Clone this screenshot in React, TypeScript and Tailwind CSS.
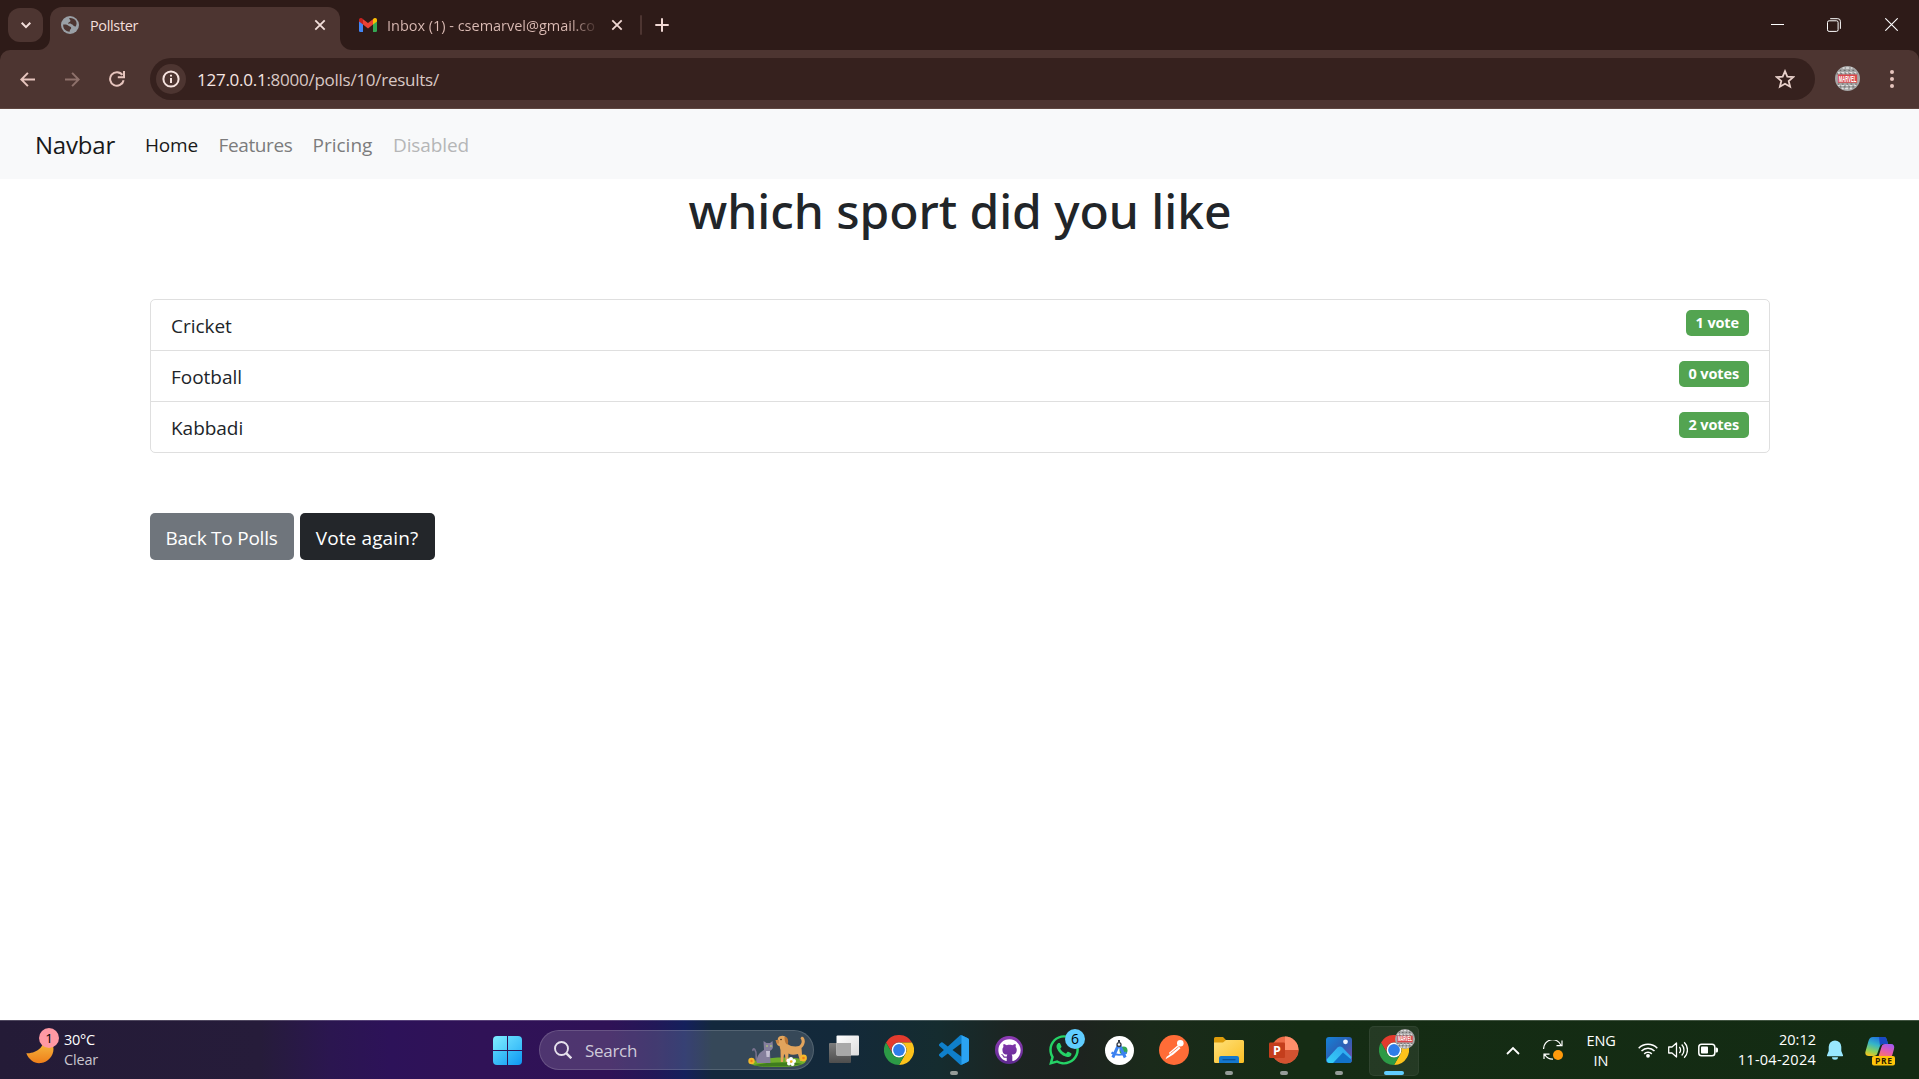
import React from "react";
import { FaGithub, FaWhatsapp } from "react-icons/fa";

function ChromeLogo({ className = "" }: { className?: string }) {
  return (
    <svg viewBox="0 0 30 30" className={className}>
      <path d="M2 7.5A15 15 0 0 1 28 7.5H15A7.5 7.5 0 0 0 8.5 18.75Z" fill="#e33b2e" />
      <path d="M28 7.5A15 15 0 0 1 15 30L21.5 18.75A7.5 7.5 0 0 0 15 7.5Z" fill="#fcc21b" />
      <path d="M15 30A15 15 0 0 1 2 7.5L8.5 18.75A7.5 7.5 0 0 0 21.5 18.75Z" fill="#2c9a46" />
      <circle cx="15" cy="15" r="7.4" fill="#fff" />
      <circle cx="15" cy="15" r="5.9" fill="#2f7de9" />
    </svg>
  );
}

function Marvel({ className = "" }: { className?: string }) {
  return (
    <svg viewBox="0 0 26 26" className={`shrink-0 overflow-visible ${className}`}>
      <circle cx="13" cy="13" r="13" fill="#a6a6a6" />
      <g stroke="#e0e0e0" strokeWidth="1.6" strokeDasharray="2 1.5 3 2">
        <path d="M8 2H18M3 7H23M3 20H23M7 23.5H19" />
      </g>
      <g stroke="#6d6d6d" strokeWidth="1.3" strokeDasharray="1.5 2.5 2 3">
        <path d="M5 4.5H21M1.5 8.200H24M3 18.800H23.500M5 21.800H21" />
      </g>
      <rect x="3" y="8.800" width="20" height="8.600" fill="#d9474c" />
      <text x="13" y="16.200" fontSize="8.500" fontWeight="700" fontFamily="Liberation Sans" fill="#fff" textAnchor="middle" textLength="18" lengthAdjust="spacingAndGlyphs">MARVEL</text>
    </svg>
  );
}

function Cross({ className = "" }: { className?: string }) {
  return (
    <svg viewBox="0 0 12 12" className={`h-3 w-3 shrink-0 ${className}`} stroke="currentColor" strokeWidth="1.8">
      <path d="M1.3 1.3 10.7 10.7M10.7 1.3 1.3 10.7" />
    </svg>
  );
}

function TabStrip() {
  return (
    <div className="flex h-[50px] bg-[#2e1b18] text-[14.5px] leading-5">
      <div className="z-10 ml-2 mt-2 flex h-[34px] w-[35px] items-center justify-center rounded-[12px] bg-[#4d3531] text-[#f3dfdb]">
        <svg viewBox="0 0 12 12" className="h-3 w-3" fill="none" stroke="currentColor" strokeWidth="2">
          <path d="M1.7 3.8 6 8.1 10.3 3.8" />
        </svg>
      </div>
      <div className="relative ml-[7px] mt-[7px] flex h-[43px] w-[290px] rounded-t-[12px] bg-[#4d3531] text-[#f3dfdb]">
        <span className="absolute -left-3 bottom-0 h-3 w-3 bg-[#4d3531]">
          <span className="block h-3 w-3 rounded-br-[12px] bg-[#2e1b18]" />
        </span>
        <span className="absolute -right-3 bottom-0 h-3 w-3 bg-[#4d3531]">
          <span className="block h-3 w-3 rounded-bl-[12px] bg-[#2e1b18]" />
        </span>
        <div className="flex h-9 w-full items-center pl-[11px] pr-[14px]">
          <svg viewBox="0 0 18 18" className="h-[18px] w-[18px]">
            <circle cx="9" cy="9" r="9" fill="#9aa0a6" />
            <path d="M2.2 8.5C4 8.6 6 8.3 7.5 9.8 8.6 11 10.2 10.3 10.2 12 10.2 13 8.8 13.2 8.6 15.8 4.5 15.5 1.8 12.3 2.2 8.5ZM8.3 2.1C8 3.8 9.6 3.6 9.4 5 9.2 6.2 7.3 5.8 7.3 7.4 7.4 8.4 9.6 7.6 11 8.3 12.6 9.2 12.3 10.5 14.8 10.6 17.4 5.6 13.4 1.5 8.3 2.1Z" fill="#4d3531" />
          </svg>
          <span className="ml-[11px] pt-0.5 tracking-[-0.36px]">Pollster</span>
          <Cross className="ml-auto" />
        </div>
      </div>
      <div className="mt-[7px] flex h-9 items-center text-[#dcbcb5]">
        <svg viewBox="0 0 18 14" className="ml-[19px] h-[14px] w-[18px]">
          <path d="M0 2V12.7A1.3 1.3 0 0 0 1.3 14H4V5.8Z" fill="#4285f4" />
          <path d="M18 2V12.7A1.3 1.3 0 0 1 16.7 14H14V5.8Z" fill="#34a853" />
          <path d="M14 1.2V6.6L18 3.6V2C18 .1 15.9-.6 14.6.5Z" fill="#fbbc04" />
          <path d="M4 6.6V1.2L9 5 14 1.2V6.6L9 10.4Z" fill="#ea4335" />
          <path d="M0 2V3.6L4 6.6V1.2L3.4.5C2.1-.6 0 .1 0 2Z" fill="#c5221f" />
        </svg>
        <span className="ml-[10px] w-[208px] bg-linear-to-r from-[#dcbcb5] from-88% to-[#4a3430] bg-clip-text pt-0.5 whitespace-nowrap text-transparent tracking-[-0.02px]">
          Inbox (1) - csemarvel@gmail.co
        </span>
        <Cross className="ml-[16px] text-[#f0d8d3]" />
        <span className="ml-[17px] h-5 w-[2px] rounded bg-[#4d3531]" />
        <svg viewBox="0 0 14 14" className="ml-[13px] h-[14px] w-[14px]" stroke="#f0d8d3" strokeWidth="2">
          <path d="M7 .3V13.7M.3 7H13.7" />
        </svg>
      </div>
      <div className="ml-auto flex h-[49px] items-center pr-[21px] text-white">
        <span className="h-px w-[13px] bg-white" />
        <svg viewBox="0 0 14 14" className="ml-[43px] h-[14px] w-[14px]" fill="none" stroke="currentColor">
          <rect x=".5" y="2.8" width="10.6" height="10.6" rx="1.6" />
          <path d="M3.2 .7H10.8A2.6 2.6 0 0 1 13.4 3.3V10.8" />
        </svg>
        <svg viewBox="0 0 13 13" className="ml-[44px] h-[13px] w-[13px]" stroke="currentColor" strokeWidth="1.1">
          <path d="M.3 .3 12.7 12.7M12.7 .3 .3 12.7" />
        </svg>
      </div>
    </div>
  );
}

function Toolbar() {
  return (
    <div className="bg-[#2e1b18]">
      <div className="flex h-[59px] items-center rounded-t-[10px] border-b border-[#5e4640] bg-[#4d3531] pl-5 pr-[25px] text-[#e6c4bd]">
        <svg viewBox="0 0 15 15" className="h-[15px] w-[15px]" fill="none" stroke="currentColor" strokeWidth="2">
          <path d="M15 7.5H1.6M7.9 .9 1.3 7.5 7.9 14.1" />
        </svg>
        <svg viewBox="0 0 15 15" className="ml-[30px] h-[15px] w-[15px]" fill="none" stroke="#8e716b" strokeWidth="2">
          <path d="M0 7.5H13.4M7.1 .9 13.7 7.5 7.1 14.1" />
        </svg>
        <svg viewBox="0 0 16 16" className="ml-[29px] h-4 w-4" fill="none" stroke="currentColor" strokeWidth="2">
          <path d="M14.6 9.2A6.8 6.8 0 1 1 13.4 3.9" />
          <path d="M15 0V6.2H8.8" />
        </svg>
        <div className="ml-[25px] flex h-[42px] flex-1 items-center rounded-full bg-[#36211e] pl-[6px] pr-5">
          <span className="flex h-[30px] w-[30px] items-center justify-center rounded-full bg-[#4d3531]">
            <svg viewBox="0 0 18 18" className="h-[18px] w-[18px]" fill="none" stroke="#f6e3df" strokeWidth="2">
              <circle cx="9" cy="9" r="7.6" />
              <path d="M9 8V13M9 4.8V6.6" />
            </svg>
          </span>
          <span className="ml-[11px] whitespace-nowrap pt-0.5 text-[17px] leading-5 tracking-[-0.26px] text-[#d9c8c4]">
            <span className="text-[#f6e6e2]">127.0.0.1</span>:8000/polls/10/results/
          </span>
          <svg viewBox="0 0 20 20" className="ml-auto h-5 w-5" fill="none" stroke="#e8d0ca" strokeWidth="1.8">
            <path d="M10 2.2 12.3 7.6 18.2 8.1 13.7 12 15.1 17.7 10 14.7 4.9 17.7 6.3 12 1.8 8.1 7.7 7.6Z" />
          </svg>
        </div>
        <Marvel className="-mt-px ml-[20px] h-[25px] w-[25px]" />
        <div className="ml-[30px] flex w-1 flex-col gap-[3px]">
          <span className="h-1 w-1 rounded-full bg-current" />
          <span className="h-1 w-1 rounded-full bg-current" />
          <span className="h-1 w-1 rounded-full bg-current" />
        </div>
      </div>
    </div>
  );
}

const CHOICES = [
  { name: "Cricket", votes: "1 vote" },
  { name: "Football", votes: "0 votes" },
  { name: "Kabbadi", votes: "2 votes" },
];

function Page() {
  return (
    <main className="flex-1 bg-white text-[19px] text-[#212529]">
      <nav className="flex h-[70px] items-center bg-[#f8f9fa] pl-[35px] pt-0.5">
        <span className="w-[110px] text-[24px] tracking-[-0.2px] text-[#191919]">Navbar</span>
        <span className="w-[73.500px] tracking-[-0.17px] text-[#191919]">Home</span>
        <span className="w-[94px] tracking-[-0.37px] text-[#7c7c7d]">Features</span>
        <span className="w-[80.500px] text-[#7c7c7d]">Pricing</span>
        <span className="tracking-[-0.11px] text-[#b5b6b7]">Disabled</span>
      </nav>
      <div className="mx-auto w-[1620px]">
        <h1 className="pt-0.5 pl-px text-center font-['Noto_Sans'] text-[48px] leading-[60px] font-medium tracking-[-0.05px]">
          which sport did you like
        </h1>
        <ul className="mt-[58px] divide-y divide-[#dfdfdf] rounded-[5px] border border-[#dfdfdf]">
          {CHOICES.map((c) => (
            <li key={c.name} className="box-content flex h-[50px] items-start justify-between pl-[20.500px] pr-[20px]">
              <span className="pt-px leading-[51px] tracking-[-0.03px]">{c.name}</span>
              <span className="mt-[10px] h-[26px] rounded-[5px] bg-[#53a451] px-[9.5px] text-[14.5px] leading-[25px] font-bold tracking-[-0.12px] text-white">
                {c.votes}
              </span>
            </li>
          ))}
        </ul>
        <div className="mt-[60px] flex gap-[6px] text-white">
          <span className="h-[47px] w-[144px] rounded-[5px] bg-[#6f757c] pt-[2px] text-center leading-[47px] tracking-[-0.24px]">
            Back To Polls
          </span>
          <span className="h-[47px] w-[135px] rounded-[5px] bg-[#23262a] pt-[2px] text-center leading-[47px] tracking-[0.12px]">
            Vote again?
          </span>
        </div>
      </div>
    </main>
  );
}

function Pets() {
  return (
    <svg viewBox="0 0 60 32" className="h-8 w-[60px]">
      <path d="M2 28C8 22 50 20 58 26 56 31 45 32 28 32 14 32 4 31 2 28Z" fill="#6fae2c" />
      <path d="M6 30C20 27 44 27 54 29 46 32 14 32.500 6 30Z" fill="#3f7d1e" />
      <path d="M10 27C6 24 10 19 7 15 6 13 4.500 14 5 16" fill="none" stroke="#77718d" strokeWidth="1.600" />
      <path d="M9 28C8 21 12 17 16 15L15.500 6 18.500 8H22L24.500 6 25 12C25 14 23 15 22 16L22.500 28Z" fill="#857f9c" />
      <path d="M18 16H22L21.500 22H18.500Z" fill="#c5c0d4" />
      <circle cx="19" cy="11" r=".8" fill="#bfe36a" />
      <circle cx="23" cy="11" r=".8" fill="#bfe36a" />
      <path d="M30 3C32-.5 38 0 39 4L39.500 9C42 11.500 48 12 51 11 54.500 9 54 5 52.500 3.500 53.500 0 57 2 56.800 7 56.300 10 55 12 53.500 13L54.500 26H52L50 19C46 20 43 20 40.500 18.500L40 27H37.800L37 19.500H36L35 27H32.800L32.500 15 31.500 11C29 11 28 8 29.500 6Z" fill="#e2a45c" />
      <path d="M36.500 2C40 1 41 7 39.500 9.500 37.500 9 36.500 6 36.500 2Z" fill="#b87333" />
      <path d="M27.500 5H31V8.500H28.500Z" fill="#c98543" />
      <circle cx="33" cy="4.500" r=".8" fill="#3a2415" />
      <g fill="#fff"><circle cx="43" cy="24" r="2" /><circle cx="46" cy="26" r="2" /><circle cx="44.500" cy="29" r="2" /><circle cx="41" cy="28.500" r="2" /><circle cx="40.500" cy="25.500" r="2" /></g>
      <circle cx="43.200" cy="26.500" r="1.300" fill="#f4b51c" />
      <circle cx="3.500" cy="26" r="3.200" fill="#f5b92a" />
      <circle cx="3.500" cy="26" r="1.200" fill="#f07e1a" />
      <circle cx="55.500" cy="23" r="3.400" fill="#f5b92a" />
      <circle cx="55.500" cy="23" r="1.300" fill="#f07e1a" />
    </svg>
  );
}

function TaskIcon({ children, dot = false }: { children: React.ReactNode; dot?: boolean }) {
  return (
    <div className="relative flex h-[59px] w-[55px] items-center justify-center">
      {children}
      {dot && <span className="absolute bottom-[5px] left-[23.500px] h-1 w-2 rounded-full bg-[#959c98]" />}
    </div>
  );
}

function TaskIcons() {
  return (
    <div className="ml-[2.500px] flex">
      <TaskIcon>
        <svg viewBox="0 0 30 28" className="mb-0.5 h-7 w-[30px]">
          <defs>
            <linearGradient id="tvFront" x1="0" y1="0" x2="1" y2="1"><stop stopColor="#fff" /><stop offset="1" stopColor="#dcdcdc" /></linearGradient>
            <linearGradient id="tvBack" x1="0" y1="0" x2="0" y2="1"><stop stopColor="#7d7d7d" /><stop offset="1" stopColor="#4d4d4d" /></linearGradient>
          </defs>
          <rect y="8" width="22" height="20" rx="1" fill="url(#tvBack)" />
          <rect x="7.500" y=".5" width="22.500" height="20" rx="1" fill="url(#tvFront)" />
          <rect x="7.500" y="8" width="14.500" height="12.500" fill="#a9a9a9" />
        </svg>
      </TaskIcon>
      <TaskIcon><ChromeLogo className="h-[30px] w-[30px]" /></TaskIcon>
      <TaskIcon dot>
        <svg viewBox="0 0 24 24" className="h-[30px] w-[30px]">
          <path d="M23.150 2.587L18.210.210a1.494 1.494 0 0 0-1.705.290l-9.460 8.630-4.120-3.128a.999.999 0 0 0-1.276.057L.327 7.261A1 1 0 0 0 .326 8.740L3.899 12 .326 15.260a1 1 0 0 0 .001 1.479L1.650 17.940a.999.999 0 0 0 1.276.057l4.120-3.128 9.460 8.630a1.492 1.492 0 0 0 1.704.290l4.942-2.377A1.500 1.500 0 0 0 24 20.060V3.939a1.500 1.500 0 0 0-.850-1.352zm-5.146 14.861L10.826 12l7.178-5.448v10.896z" fill="#0f7fca" />
          <path d="M18 .2 23.150 2.587A1.500 1.500 0 0 1 24 3.939V20.060A1.500 1.500 0 0 1 23.150 21.400L18 23.850Z" fill="#2ba3f2" />
        </svg>
      </TaskIcon>
      <TaskIcon>
        <span className="flex h-7 w-7 items-center justify-center rounded-full bg-linear-to-b from-[#8f3bb5] to-[#5f2a91]">
          <FaGithub className="h-[23px] w-[23px] text-white" />
        </span>
      </TaskIcon>
      <TaskIcon>
        <FaWhatsapp className="h-[34px] w-[34px] text-[#25d366]" />
        <span className="absolute left-[28.500px] top-[8px] flex h-5 w-5 items-center justify-center rounded-full bg-[#60cdff] text-[14px] text-black">6</span>
      </TaskIcon>
      <TaskIcon>
        <span className="flex h-[29px] w-[29px] items-center justify-center rounded-full bg-white">
          <svg viewBox="0 0 20 20" className="h-5 w-5">
            <circle cx="14.500" cy="10.500" r="4" fill="#34a853" />
            <path d="M10 4 3.800 17.500M10 4 16.200 17.500" stroke="#3c82f0" strokeWidth="3" />
            <path d="M2.500 12.500C7 15.500 13 15.500 17.500 12.500" fill="none" stroke="#3c82f0" strokeWidth="2.200" />
            <circle cx="10" cy="4.500" r="2.600" fill="#333a44" />
            <circle cx="10" cy="4.500" r="1.200" fill="#fff" />
            <path d="M9 0H11V2H9Z" fill="#333a44" />
          </svg>
        </span>
      </TaskIcon>
      <TaskIcon>
        <svg viewBox="0 0 30 30" className="h-[30px] w-[30px]">
          <circle cx="15" cy="15" r="15" fill="#ff6c37" />
          <circle cx="21.300" cy="8.300" r="3.300" fill="#fff" />
          <path d="M18.700 10.300 21.500 13.200 14 19.700 6.500 24.200 7.700 21.800 10.800 19.500 10 17.800Z" fill="#fff" />
          <path d="M11.500 18.500 19.500 12" stroke="#ff8a5f" strokeWidth="1" />
        </svg>
      </TaskIcon>
      <TaskIcon dot>
        <svg viewBox="0 0 30 26" className="h-[26px] w-[30px]">
          <defs><linearGradient id="folder" x1="0" y1="0" x2="1" y2="1"><stop stopColor="#ffe07a" /><stop offset="1" stopColor="#fbbf24" /></linearGradient></defs>
          <path d="M0 1.500A1.500 1.500 0 0 1 1.500 0H9L12 3H28.500V10H0Z" fill="#dd9c0b" />
          <path d="M0 5.500H9L12 3H28.500A1.500 1.500 0 0 1 30 4.500V24.500A1.500 1.500 0 0 1 28.500 26H1.500A1.500 1.500 0 0 1 0 24.500Z" fill="url(#folder)" />
          <path d="M5 26V21A2 2 0 0 1 7 19H23A2 2 0 0 1 25 21V26Z" fill="#1478cf" />
          <path d="M8.500 22.700H21.500" stroke="#0b4f94" strokeWidth="1.200" />
        </svg>
      </TaskIcon>
      <TaskIcon dot>
        <svg viewBox="0 0 30 28" className="h-7 w-[30px]">
          <circle cx="16" cy="14" r="13.500" fill="#ed6c47" />
          <path d="M16 .5A13.500 13.500 0 0 1 29.500 14H16Z" fill="#ff8f6b" />
          <path d="M29.500 14A13.500 13.500 0 0 1 3.500 19L16 14Z" fill="#d35230" />
          <rect x="0" y="6.500" width="16" height="15.500" rx="1.300" fill="#c43e1c" />
          <text x="8" y="18.600" fontSize="12.500" fontWeight="700" fontFamily="Open Sans" textAnchor="middle" fill="#fff">P</text>
        </svg>
      </TaskIcon>
      <TaskIcon dot>
        <svg viewBox="0 0 26 26" className="h-[26px] w-[26px]">
          <defs>
            <linearGradient id="phBg" x1="0" y1="0" x2="1" y2="1"><stop stopColor="#1683d8" /><stop offset=".5" stopColor="#2a5fb5" /><stop offset="1" stopColor="#7a4fa8" /></linearGradient>
            <linearGradient id="phHill" x1="0" y1="1" x2="1" y2="0"><stop stopColor="#35d0f7" /><stop offset="1" stopColor="#2f9fee" /></linearGradient>
          </defs>
          <rect width="26" height="26" rx="3" fill="url(#phBg)" />
          <path d="M1 22 11.500 10.500Q14 8.300 16.500 10.500L25.500 20 23 26H3A3 3 0 0 1 1 22Z" fill="url(#phHill)" />
          <path d="M7 26 17 15.500 25.800 23A3 3 0 0 1 23 26Z" fill="#1273c9" />
          <circle cx="19.500" cy="4.800" r="2.400" fill="#f0f6ff" />
        </svg>
      </TaskIcon>
      <TaskIcon>
        <span className="absolute left-[2.500px] top-[5px] h-[50px] w-[50px] rounded-[5px] border border-white/5 bg-white/7" />
        <ChromeLogo className="relative h-[30px] w-[30px]" />
        <Marvel className="absolute left-[28px] top-[8px] h-5 w-5" />
        <span className="absolute bottom-[5px] left-[17.500px] h-1 w-5 rounded-full bg-[#60cdff]" />
      </TaskIcon>
    </div>
  );
}

function Tray() {
  return (
    <div className="ml-auto flex h-full items-center text-[14.500px] leading-5 text-white">
      <svg viewBox="0 0 14 9" className="h-[9px] w-[14px]" fill="none" stroke="currentColor" strokeWidth="1.800"><path d="M1 8 7 2 13 8" /></svg>
      <svg viewBox="0 0 20 20" className="ml-[23px] h-5 w-5" fill="none" stroke="#fff" strokeWidth="1.200">
        <path d="M.6 9A9 9 0 0 1 18 5.500M19 .5V5.700H13.500" />
        <path d="M1 19V14.200H6.500M1.800 14.500A9 9 0 0 0 10 19.200" />
        <circle cx="15" cy="15" r="5" fill="#ff9a0c" stroke="none" />
      </svg>
      <div className="ml-[24px] flex w-7 flex-col items-center pt-px">
        <span className="tracking-[-0.170px]">ENG</span>
        <span>IN</span>
      </div>
      <svg viewBox="0 0 20 16" className="ml-[23px] h-4 w-5" fill="none" stroke="#fff" strokeWidth="1.500">
        <path d="M.7 6.200A13 13 0 0 1 19.300 6.200M3.500 9.100A9 9 0 0 1 16.500 9.100M6.200 11.900A5.400 5.400 0 0 1 13.800 11.900" />
        <circle cx="10" cy="13.800" r="1.900" fill="#fff" stroke="none" />
      </svg>
      <svg viewBox="0 0 20 18" className="ml-[10px] h-[18px] w-5" fill="none" stroke="#fff" strokeWidth="1.300">
        <path d="M.7 6H4L8.500 2V16L4 12H.7Z" strokeLinejoin="round" />
        <path d="M11.300 6A4.200 4.200 0 0 1 11.300 12M13.700 3.500A7.800 7.800 0 0 1 13.700 14.500M16.200 1.200A11 11 0 0 1 16.200 16.800" />
      </svg>
      <svg viewBox="0 0 20 14" className="ml-[10px] h-[14px] w-5">
        <rect x=".8" y="1.300" width="16" height="11.400" rx="2.800" fill="none" stroke="#fff" strokeWidth="1.500" />
        <rect x="3" y="3.500" width="7" height="7" rx=".8" fill="#fff" />
        <path d="M17.500 4.500H18.500A1.500 1.500 0 0 1 20 6V8A1.500 1.500 0 0 1 18.500 9.500H17.500Z" fill="#fff" />
      </svg>
      <div className="ml-[20px] flex w-[78px] flex-col items-end whitespace-nowrap">
        <span>20:12</span>
        <span className="tracking-[0.250px]">11-04-2024</span>
      </div>
      <svg viewBox="0 0 18 20" className="ml-[10px] h-5 w-[18px]" fill="#99e8ff">
        <path d="M9 .5A6.300 6.300 0 0 0 2.700 6.800V11L1 15.200A.8.8 0 0 0 1.700 16.300H16.300A.8.8 0 0 0 17 15.200L15.300 11V6.800A6.300 6.300 0 0 0 9 .5ZM6 17.300H12A3 2.500 0 0 1 6 17.300Z" />
      </svg>
      <svg viewBox="0 0 30 30" className="ml-[21px] mr-6 mt-[3px] h-[30px] w-[30px]">
        <defs>
          <linearGradient id="cpA" x1=".6" y1="0" x2=".2" y2="1"><stop stopColor="#1f6fe0" /><stop offset=".4" stopColor="#35b5c8" /><stop offset=".75" stopColor="#8ed058" /><stop offset="1" stopColor="#f6c31e" /></linearGradient>
          <linearGradient id="cpB" x1=".7" y1="0" x2=".3" y2="1"><stop stopColor="#a45af0" /><stop offset=".5" stopColor="#e25bb0" /><stop offset="1" stopColor="#ff7a59" /></linearGradient>
        </defs>
        <path d="M8 0H19C21 0 21.500 1.500 22.200 4L23 7H18C16 7 15.300 8 14.800 9.500L12.500 16C11.800 18.200 10.700 19 8.500 19H4C1 19-.2 17.500.5 14.500L3.500 4C4.300 1.200 5.500 0 8 0Z" fill="url(#cpA)" />
        <path d="M14 0H19C21 0 21.500 1.500 22.200 4L23 7H18C16.500 7 15.800 7.500 15 9Z" fill="#1a49c4" />
        <path d="M20 7H26C28.800 7 29.800 9 29 12L27.300 18C26.500 20.500 25 21 23 21H13L16.500 10C17.200 7.800 18 7 20 7Z" fill="url(#cpB)" />
        <rect x="7" y="19" width="23" height="9.500" rx="2" fill="#ffc50a" />
        <text x="18.500" y="26.700" fontSize="8.500" fontWeight="700" fontFamily="Open Sans" textAnchor="middle" textLength="17" fill="#2b1d00">PRE</text>
      </svg>
    </div>
  );
}

function Taskbar() {
  return (
    <footer className="flex h-[59px] items-center border-t border-white/20 bg-[linear-gradient(90deg,#241b37_0px,#261c3a_260px,#2b1650_330px,#2d1259_390px,#301257_480px,#2f1256_610px,#221858_655px,#14205c_685px,#13283d_712px,#13293a_840px,#152c2f_940px,#1c2522_1010px,#1d231f_1080px,#1a2a1a_1150px,#152c14_1300px,#132b13_1919px)] bg-origin-border text-white">
      <div className="relative ml-[26px] flex h-full w-[467px] items-center">
        <svg viewBox="0 0 28 30" className="h-[30px] w-7">
          <defs><linearGradient id="moon" x1="0" y1="0" x2="0" y2="1"><stop stopColor="#f7c548" /><stop offset="1" stopColor="#ef7f1a" /></linearGradient></defs>
          <path d="M17 3C20 10 11 19 .3 18.200 3 25 9 29 15 28 22 27 27.500 21 27.500 14 27.500 8 22 3.500 17 3Z" fill="url(#moon)" />
        </svg>
        <span className="absolute left-[13px] top-[7px] flex h-5 w-5 items-center justify-center rounded-full bg-[#ff99a4] text-[13.500px] text-black">1</span>
        <div className="ml-[10px] flex flex-col text-[14.500px] leading-5">
          <span className="tracking-[-0.230px]">30°C</span>
          <span className="tracking-[-0.180px] text-[#c9c6cf]">Clear</span>
        </div>
      </div>
      <div className="grid h-[29px] w-[29px] grid-cols-2 gap-px">
        <span className="rounded-tl-sm bg-linear-to-br from-[#7eecff] to-[#52d0fb]" />
        <span className="rounded-tr-sm bg-linear-to-br from-[#62d9fd] to-[#35bbf8]" />
        <span className="rounded-bl-sm bg-linear-to-br from-[#4fcffb] to-[#23a9f5]" />
        <span className="rounded-br-sm bg-linear-to-br from-[#37bdf8] to-[#0d96f3]" />
      </div>
      <div className="ml-[17px] flex h-10 w-[275px] items-center rounded-full border border-white/15 bg-white/15 pl-[14px] pr-[5px]">
        <svg viewBox="0 0 18 18" className="h-[18px] w-[18px]" fill="none" stroke="#e6e1ec" strokeWidth="1.900">
          <circle cx="7.500" cy="7.500" r="6.500" />
          <path d="M12.200 12.200 17.300 17.300" strokeWidth="2.400" />
        </svg>
        <span className="ml-[13px] pt-0.5 text-[17px] leading-5 tracking-[-0.300px] text-[#cfcad9]">Search</span>
        <div className="ml-auto mt-0.5"><Pets /></div>
      </div>
      <TaskIcons />
      <Tray />
    </footer>
  );
}

export default function App() {
  return (
    <div className="flex h-[1079px] w-[1919px] flex-col overflow-hidden bg-white font-['Open_Sans',sans-serif]">
      <TabStrip />
      <Toolbar />
      <Page />
      <Taskbar />
    </div>
  );
}
